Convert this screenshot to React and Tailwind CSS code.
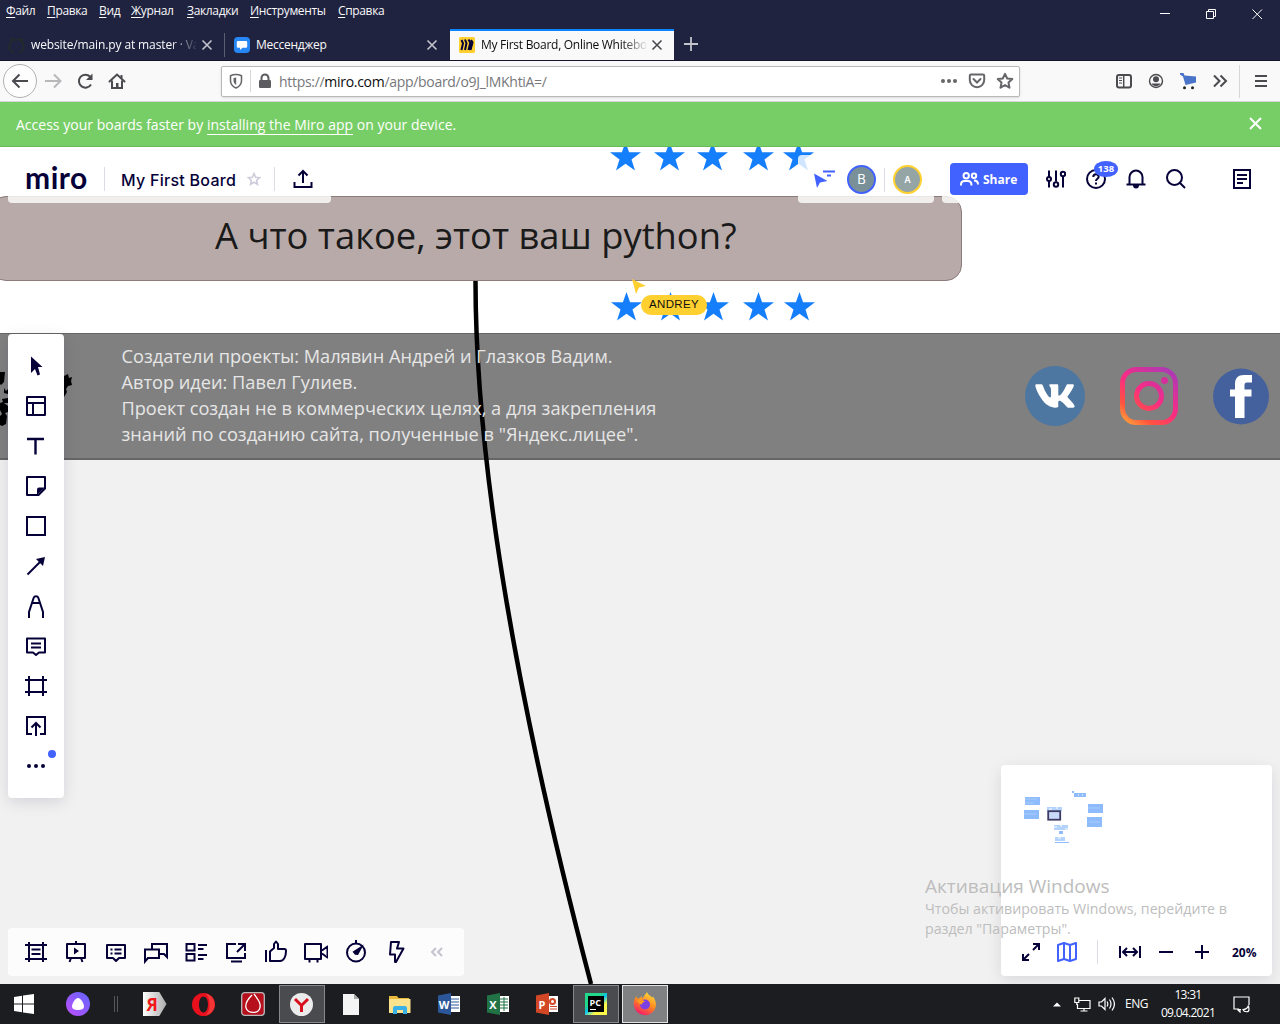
import { FaVk } from "react-icons/fa";

function Svg({ children, w = 24, h = 24, vb, className = "", sw = 2, stroke = "currentColor", fill = "none" }) {
  return (
    <svg width={w} height={h} viewBox={vb || `0 0 ${w} ${h}`} fill={fill} stroke={stroke} strokeWidth={sw} className={`shrink-0 ${className}`}>
      {children}
    </svg>
  );
}

const menu = [
  ["Ф", "айл", "w-[41px]"],
  ["П", "равка", "w-[52px]"],
  ["В", "ид", "w-[32px]"],
  ["Ж", "урнал", "w-[56px]"],
  ["З", "акладки", "w-[63px]"],
  ["И", "нструменты", "w-[88px]"],
  ["С", "правка", "w-[50px]"],
];

function Cross({ className = "" }) {
  return (
    <Svg w={12} h={12} sw={1.6} className={className}>
      <path d="M1.5 1.5l9 9M10.5 1.5l-9 9" />
    </Svg>
  );
}

function TitleBar() {
  return (
    <header className="flex h-[61px] shrink-0 flex-col border-b border-[#13142b] bg-[#202340] text-[#f9f9fa]">
      <div className="flex h-[29px] justify-between">
        <nav className="flex h-[21px] items-center pl-1.5 text-[12px] tracking-[-0.35px]">
          {menu.map(([a, b, w]) => (
            <span key={b} className={w}>
              <span className="underline underline-offset-2">{a}</span>
              {b}
            </span>
          ))}
        </nav>
        <div className="flex h-7 items-center">
          <Svg w={46} h={28} sw={1}><path d="M18 13.5h10" stroke="#fff" /></Svg>
          <Svg w={46} h={28} sw={1}><path d="M18.5 11.5h7v7h-7zM20.5 11.5v-2h7v7h-2" stroke="#fff" /></Svg>
          <Svg w={46} h={28} sw={1}><path d="M18.5 9.5l9.5 9.5M28 9.5l-9.5 9.5" stroke="#fff" /></Svg>
        </div>
      </div>
      <div className="flex h-8 items-stretch text-[12px] tracking-[-0.25px]">
        <div className="flex w-[225px] items-center pt-0.5 pl-2">
          <Svg w={17} h={17} sw={2.2} className="mr-1.5">
            <path d="M6 15.5c-7-2-6-13 2.5-13s9.5 11 2.5 13" stroke="#24292e" />
            <path d="M3.5 5l0-3 3 1M13.5 5l0-3-3 1" stroke="#24292e" sw={1} />
          </Svg>
          <div className="w-[165px] overflow-hidden tracking-[-0.12px] whitespace-nowrap [mask-image:linear-gradient(to_right,black_140px,transparent_168px)]">
            website/main.py at master · Vadim
          </div>
          <Cross className="ml-[5px] text-[#c4c4cc]" />
          <div className="ml-auto h-6 w-px bg-[#5c5e74]" />
        </div>
        <div className="flex w-[225px] items-center pt-0.5 pl-[9px]">
          <Svg w={16} h={16} className="mr-1.5">
            <rect width="16" height="16" rx="4" fill="#2787f5" stroke="none" />
            <path d="M4 4h8a1.2 1.2 0 0 1 1.2 1.2v4.3a1.2 1.2 0 0 1-1.2 1.2H8.500L6 13v-2.300H4A1.200 1.200 0 0 1 2.800 9.500V5.200A1.200 1.200 0 0 1 4 4z" fill="#fff" stroke="none" />
          </Svg>
          <span>Мессенджер</span>
          <Cross className="mr-3 ml-auto text-[#c4c4cc]" />
        </div>
        <div className="flex w-[224px] items-center border-t-2 border-[#0a84ff] bg-[#f9f9fa] pl-[9px] text-[#0c0c0d]">
          <Svg w={16} h={16} className="mr-1.5">
            <rect width="16" height="16" rx="1.500" fill="#ffd02f" stroke="none" />
            <path d="M2.500 3l1.500 3.300-1.500 6.700M6 2.500l1.500 3.800L6 13M9.500 2.500l1.800 3.300L9.500 13M12 3l1.500 2.500-2 7.500" stroke="#050038" strokeWidth="2" />
          </Svg>
          <div className="w-[165px] overflow-hidden tracking-[-0.28px] whitespace-nowrap [mask-image:linear-gradient(to_right,black_140px,transparent_168px)]">
            My First Board, Online Whiteboard
          </div>
          <Cross className="ml-[5px] text-[#4a4a4f]" />
        </div>
        <Svg w={34} h={30} sw={1.8}><path d="M17 8v14M10 15h14" stroke="#c4c4cc" /></Svg>
      </div>
    </header>
  );
}

function NavBar() {
  return (
    <div className="flex h-[41px] shrink-0 items-center border-b border-[#d7d7db] bg-[#f9f9fa] text-[#4a4a4f]">
      <div className="ml-[3px] flex size-[34px] items-center justify-center rounded-full border border-[#b1b1b3] bg-[#fdfdfe]">
        <Svg w={18} h={16}><path d="M17 8H2M8.500 1.500L2 8l6.500 6.500" /></Svg>
      </div>
      <Svg w={32} h={16} className="text-[#b8b8bb]"><path d="M8 8h15M17 1.500L23.500 8 17 14.500" /></Svg>
      <Svg w={32} h={18}>
        <path d="M22 12.500A6.500 6.500 0 1 1 21 4.500" />
        <path d="M23.500 1.500v6.500H17z" fill="currentColor" stroke="none" />
      </Svg>
      <Svg w={32} h={18}>
        <path d="M8.500 9.500L16 2.500l7.500 7" strokeLinecap="round" />
        <path d="M11 8.500V16h10V8.500M20.500 3v3" />
        <path d="M15 11h2.500v5H15z" fill="currentColor" stroke="none" />
      </Svg>
      <div className="ml-[88px] flex h-[31px] w-[799px] items-center rounded-[2px] border border-[#b9b9bb] bg-white shadow-sm">
        <Svg w={28} h={18} sw={1.5} className="text-[#66666a]">
          <path d="M14 2.500c2 0 4 .5 5.500 1.200v5c0 3-2.500 6-5.500 7.300-3-1.300-5.500-4.300-5.500-7.300v-5C10 3 12 2.500 14 2.500z" />
          <path d="M14.200 5.500v7.500c-2-1-2.700-3-2.700-4.500V6z" fill="currentColor" stroke="none" />
        </Svg>
        <div className="h-[22px] w-px bg-[#d7d7db]" />
        <Svg w={28} h={18}>
          <rect x="8" y="8" width="12" height="8" rx="1.200" fill="#5c5c60" stroke="none" />
          <path d="M10.500 9V6a3.500 3.500 0 0 1 7 0v3" stroke="#5c5c60" />
        </Svg>
        <div className="pt-px text-[14px] tracking-[-0.3px] text-[#77777b]">
          https://<span className="text-[#0c0c0d]">miro.com</span>/app/board/o9J_lMKhtiA=/
        </div>
        <div className="ml-auto flex items-center text-[#66666a]">
          <Svg w={28} h={18} fill="currentColor" stroke="none"><circle cx="8" cy="9" r="2" /><circle cx="14" cy="9" r="2" /><circle cx="20" cy="9" r="2" /></Svg>
          <Svg w={28} h={18}>
            <path d="M8 2.500h12a1.200 1.200 0 0 1 1.200 1.200v4.300a7.200 7.200 0 0 1-14.400 0V3.700A1.200 1.200 0 0 1 8 2.500z" />
            <path d="M10.500 7l3.500 3.500L17.500 7" strokeLinecap="round" />
          </Svg>
          <Svg w={28} h={18}><path d="M14 1.800l2.200 4.700 5.100.6-3.800 3.500 1 5.100-4.500-2.600-4.500 2.600 1-5.100-3.800-3.500 5.100-.6z" strokeLinejoin="round" /></Svg>
        </div>
      </div>
      <div className="ml-[88px] flex items-center">
        <Svg w={32} h={18}>
          <rect x="9" y="3" width="14" height="12.500" rx="2" />
          <path d="M15.700 3v12.500" strokeWidth="1.500" />
          <path d="M11 6h3M11 8.500h3M11 11h3" strokeWidth="1" />
        </Svg>
        <Svg w={32} h={18} sw={1.4}>
          <circle cx="16" cy="9" r="6.500" />
          <circle cx="16" cy="7.200" r="3" fill="currentColor" stroke="none" />
          <path d="M11.500 11.500h9c-1 2-2.800 2.700-4.500 2.700s-3.500-.7-4.500-2.700z" fill="currentColor" stroke="none" />
        </Svg>
        <Svg w={32} h={18}>
          <path d="M8 1h3.500l1 2.500 11.500 1v6l-10.500 2.500-2.500-8.500L8 2.500z" fill="#4a74c9" stroke="none" />
          <circle cx="12.500" cy="15.800" r="1.500" fill="#222" stroke="none" /><circle cx="20.500" cy="15.800" r="1.500" fill="#222" stroke="none" />
        </Svg>
        <Svg w={32} h={18}><path d="M10 3.500L15.500 9 10 14.500M16.500 3.500L22 9l-5.500 5.500" /></Svg>
        <div className="ml-[3px] h-[33px] w-px bg-[#d7d7db]" />
        <Svg w={40} h={18}><path d="M15 4h12M15 9h12M15 14h12" /></Svg>
      </div>
    </div>
  );
}

function Banner() {
  return (
    <div className="flex h-[45px] shrink-0 items-center justify-between border-b border-[#68b957] bg-[#78ce66] pr-[18px] pl-4 text-[14px] text-white">
      <p className="tracking-[0.015px] whitespace-nowrap">
        Access your boards faster by <a className="border-b border-white">installing the Miro app</a> on your device.
      </p>
      <Svg w={13} h={13} className="-mt-0.5"><path d="M1 1l11 11M12 1L1 12" /></Svg>
    </div>
  );
}

function Star({ className }) {
  return (
    <svg viewBox="0 0 31 29" width="31" height="29" className={`absolute ${className}`}>
      <path d="M15.500 0l3.600 10.300H31l-9.500 7.200L25 28.500l-9.500-6.700L6 28.500l3.500-11L0 10.300h11.900z" fill="#157efb" />
    </svg>
  );
}

function Board() {
  return (
    <div className="absolute inset-0">
      <div className="absolute inset-x-0 top-0 h-[186px] bg-white" />
      <Star className="top-[-5px] left-[609.5px]" />
      <Star className="top-[-5px] left-[653.5px]" />
      <Star className="top-[-5px] left-[696.5px]" />
      <Star className="top-[-5px] left-[742.5px]" />
      <Star className="top-[-5px] left-[782.5px]" />
      <div className="absolute top-[49px] left-[-10px] flex h-[85px] w-[972px] items-center rounded-[16px] border border-[#8a7c7b] bg-[#b8aaa8] pl-[224px] text-[36.35px] text-[#1a1a1a]">
        <span className="pb-1.5 whitespace-nowrap">А что такое, этот ваш python?</span>
      </div>
      <Star className="top-[145px] left-[610.5px]" />
      <Star className="top-[145px] left-[654.5px]" />
      <Star className="top-[145px] left-[697.5px]" />
      <Star className="top-[145px] left-[742.5px]" />
      <Star className="top-[145px] left-[783.5px]" />
      <footer className="absolute inset-x-0 top-[186px] flex h-[127px] items-center border-t border-b-2 border-[#666] bg-[#808080]">
        <svg width="80" height="70" viewBox="0 0 80 70" className="shrink-0">
          <path d="M0 11l5 0-1 10-3 3-1-1zM4 27l2 3 2-2v5l-4-1zM2 38l6-1v5l-4 0 4 3v6l-3 1 2 3-1 8-4 2-2-1v-9l2-2-2-4v-7l3-1zM64 15l4-2 1 4 3-1-1 4 1 4-4 1-2 3 1 3-3 5z" fill="#000" />
        </svg>
        <svg width="200" height="703" viewBox="0 0 200 703" className="absolute top-[-53px] left-[465px]">
          <path d="M10.500 0Q10.500 264 126 703" fill="none" stroke="#000" strokeWidth="4.500" />
        </svg>
        <p className="relative -mt-0.5 ml-[41.5px] text-[18.200px] leading-[26px] whitespace-nowrap text-[#e6e6e6]">
          Создатели проекты: Малявин Андрей и Глазков Вадим.<br />
          Автор идеи: Павел Гулиев.<br />
          Проект создан не в коммерческих целях, а для закрепления<br />
          знаний по созданию сайта, полученные в "Яндекс.лицее".
        </p>
        <div className="ml-auto flex items-center pr-[11px]">
          <div className="flex size-[60px] items-center justify-center rounded-full bg-[#4d76a1]">
            <FaVk className="size-[42px] text-white" />
          </div>
          <Svg w={58} h={58} sw={5} className="ml-[35px]">
            <defs>
              <linearGradient id="ig" x1="8" y1="58" x2="50" y2="0" gradientUnits="userSpaceOnUse">
                <stop offset="0" stopColor="#ffa03c" /><stop offset=".2" stopColor="#ff543e" /><stop offset=".5" stopColor="#fb2b84" /><stop offset="1" stopColor="#a83ab8" />
              </linearGradient>
            </defs>
            <rect x="2.500" y="2.500" width="53" height="53" rx="14" stroke="url(#ig)" />
            <circle cx="29" cy="29" r="12.500" stroke="url(#ig)" />
            <circle cx="44.500" cy="13.500" r="3.500" fill="#d4309a" stroke="none" />
          </Svg>
          <Svg w={56} h={57} className="ml-[35px]">
            <circle cx="28" cy="28.500" r="28" fill="#45619d" stroke="none" />
            <path d="M22 50V28.500h-5v-7h5V16c0-6 3-9 9-9h8v7.500h-5c-2 0-2.500 1-2.500 2.500v4.500h7v7h-7V50z" fill="#fff" stroke="none" />
          </Svg>
        </div>
      </footer>
      <svg width="14" height="15" viewBox="0 0 14 15" className="absolute top-[132px] left-[632px]">
        <path d="M0 0l14 7-7 1.500L4 15z" fill="#ffd02f" />
      </svg>
      <div className="absolute top-[148px] left-[641px] flex h-5 w-[66px] items-center justify-center rounded-full bg-[#ffd02f] font-['Liberation_Sans',sans-serif] text-[11.500px] tracking-[0.350px] text-[#111]">
        ANDREY
      </div>
    </div>
  );
}

function TopPanels() {
  return (
    <>
      <div className="absolute top-2 left-2 flex h-12 w-[323px] items-center rounded-[4px] bg-white/80 pl-[17px]">
        <span className="-mt-1 w-[62px] font-['Lato',sans-serif] text-[30px] leading-none font-bold tracking-[0.500px]">miro</span>
        <div className="ml-[17px] h-6 w-px bg-[#dcdce6]" />
        <span className="mt-px ml-4 w-[116px] font-['Inter',sans-serif] text-[16px] font-medium tracking-[0.270px] whitespace-nowrap">My First Board</span>
        <Svg w={14} h={14} sw={1.6} className="ml-[10px] text-[#cfcddb]"><path d="M7 1.500l1.600 3.700 4 .4-3 2.700.9 4L7 10.200l-3.500 2.100.9-4-3-2.700 4-.4z" /></Svg>
        <div className="ml-[13px] h-6 w-px bg-[#dcdce6]" />
        <Svg w={20} h={20} className="ml-[18px]"><path d="M1.500 13v5h17v-5M10 14V3M5.500 6.500L10 2l4.500 4.500" /></Svg>
      </div>
      <div className="absolute top-2 left-[798px] flex h-12 w-[136px] items-center rounded-[4px] bg-white/80 pt-px pl-4">
        <Svg w={21} h={18} className="-mt-0.5 text-[#4262ff]">
          <path d="M0 3.500l13.500 7.500-7.500 1.500L3 18z" fill="currentColor" stroke="none" />
          <path d="M9 1.500h12M13 5.500h4" />
        </Svg>
        <div className="ml-3 flex size-[29px] items-center justify-center rounded-full border-2 border-[#4262ff] bg-[#7a9098] font-['Inter',sans-serif] text-[13px] text-white">B</div>
        <div className="ml-2 h-6 w-px bg-[#dcdce6]" />
        <div className="ml-2 flex size-[29px] items-center justify-center rounded-full border-2 border-[#ffd02f] bg-[#95a5a6] font-['Inter',sans-serif] text-[9px] font-semibold text-white">A</div>
      </div>
      <div className="absolute top-2 left-[942px] flex h-12 w-[330px] items-center rounded-[4px] bg-white/80 pl-2">
        <button className="flex h-8 w-[78px] items-center rounded-[4px] bg-[#4262ff] pl-2.5 text-[12px] font-bold text-white">
          <Svg w={19} h={14} className="mr-1">
            <circle cx="6.200" cy="3.700" r="2.700" /><circle cx="14" cy="3.700" r="2.200" />
            <path d="M1 13.500v-1c0-2 1.500-3.500 3.500-3.500h3.400c2 0 3.500 1.500 3.500 3.500v1M14 8.500c2.500 0 4 1.500 4 4" />
          </Svg>
          <span className="pt-0.5">Share</span>
        </button>
        <Svg w={20} h={20} className="ml-[18px]">
          <path d="M3 1.500v17M10 1.500v11M17 8v10.500" />
          <circle cx="3" cy="10" r="2" fill="#fff" /><circle cx="10" cy="15.500" r="2.200" fill="#fff" /><circle cx="17" cy="5" r="2.200" fill="#fff" />
        </Svg>
        <div className="relative ml-5">
          <Svg w={20} h={20}>
            <circle cx="10" cy="10" r="9" />
            <path d="M7.300 8c0-3.700 5.400-3.500 5.400-.3 0 2-2.700 2-2.700 4.300M10 13.500v2" />
          </Svg>
          <span className="absolute -top-2 left-2 flex h-4 w-6 items-center justify-center rounded-[50%] bg-[#4262ff] text-[9.500px] font-bold text-white">138</span>
        </div>
        <Svg w={20} h={20} className="ml-5">
          <path d="M.5 15.500h19M3.500 15V8c0-3.500 3-6.500 6.500-6.500S16.500 4.500 16.500 8v7" />
          <path d="M7 16a3 3.500 0 0 0 6 0z" fill="currentColor" stroke="none" />
        </Svg>
        <Svg w={20} h={20} className="ml-5"><circle cx="8.500" cy="8.500" r="7.500" /><path d="M14 14l5 5" /></Svg>
        <Svg w={20} h={20} className="ml-[46px]"><path d="M2 1h16v18H2zM5 6h10M5 10h10M5 14h6" /></Svg>
      </div>
    </>
  );
}

const tools = [
  <path key="a" d="M7 2.500l11.500 10.500h-4.500L16 20.500 13.500 21.500 11 15l-4 4z" fill="currentColor" stroke="none" />,
  <path key="b" d="M3 3h18v18H3zM3 9h18M9 9v12" strokeLinejoin="round" />,
  <path key="c" d="M3 5h17M11.500 5v15.500" strokeWidth="2.400" />,
  <g key="d"><path d="M3 3h18v11.500L14.500 21H3z" strokeLinejoin="round" /><path d="M13 21v-5.500a2 2 0 0 1 2-2h6z" fill="currentColor" stroke="none" /></g>,
  <path key="e" d="M3 3h18v18H3z" />,
  <g key="f"><path d="M3.500 20.500L17 7" /><path d="M21 3l-2 9-7-7z" fill="currentColor" stroke="none" /></g>,
  <path key="g" d="M5 24v-6L9.800 3.500c.6-1.800 3.800-1.800 4.400 0L19 18v6M8.300 9h7.400" />,
  <g key="h"><path d="M3 4.500h18v14h-6l-3 2.500-3-2.500H3z" strokeLinejoin="round" /><path d="M7 9.500h10M7 13.500h10" /></g>,
  <path key="i" d="M5 2v20M19 2v20M1 6h22M1 18h22" />,
  <path key="j" d="M8 20H3V3h18v17h-5M12 22V9.500M7.500 13.500L12 9l4.500 4.500" />,
  <g key="k" fill="currentColor" stroke="none"><circle cx="5" cy="12" r="2" /><circle cx="12" cy="12" r="2" /><circle cx="19" cy="12" r="2" /><circle cx="28" cy="0" r="4" fill="#4262ff" /></g>,
];

const bottomTools = [
  <path key="a" d="M5 2v20M19 2v20M1 5h22M1 19h22M7.500 9.500h9M7.500 14h9" />,
  <g key="b"><path d="M3 4h18v14H3zM12 1v3M7 18l-1.500 4M17 18l1.500 4" strokeLinejoin="round" /><path d="M10 7.500l5 3.500-5 3.500z" fill="currentColor" stroke="none" /></g>,
  <g key="c"><path d="M3 5h18v13h-6l-3 3-3-3H3z" strokeLinejoin="round" /><path d="M6.500 9.500h2M10.500 9.500h7M6.500 13.500h2M10.500 13.500h7" /></g>,
  <path key="d" d="M1 21.500V9.500h14V18H4zM8 9V4h15v13l-3-3h-5" />,
  <path key="e" d="M2.500 4h8v6.500h-8zM2.500 14h8v6.500h-8zM14 5h9M14 9h5.500M14 15h9M14 19h5.500" />,
  <g key="f"><path d="M12 4H3v14h18v-5M7 21.500h11M13 12l7-7M14 4h7v7" /></g>,
  <path key="g" d="M2 10v12M6 21V11.500l4-3.500V4l2-2.500L14 4v5h6.500c1 0 1.500 1 1.500 2 0 5-2 10-6 10z" strokeLinejoin="round" />,
  <path key="h" d="M1 4h16v15H1zM18 10.500L23.500 6.500v11L18 13.500M5.500 19v3.500M13.500 19v3.500" strokeLinejoin="round" />,
  <g key="i"><circle cx="12" cy="12.500" r="9" /><path d="M12 0v3" /><path d="M17 7.500l-3.500 6.500-2-.2-1.500-1.800z" fill="currentColor" /></g>,
  <path key="j" d="M7 2h8l-2 6.500h6.500L12 22l-1 0v-7.500H6z" strokeLinejoin="round" />,
  <path key="k" d="M12 8l-4 4 4 4M18 8l-4 4 4 4" stroke="#c3c2cf" />,
];

const mapBlocks = [
  [24, 32, 15, 8], [23, 45, 15, 9], [46, 42, 15, 4], [73, 28, 12, 4], [71, 26, 2, 2], [87, 39, 15, 9], [86, 52, 15, 10],
  [53, 60, 14, 5], [58, 66, 4, 3], [54, 72, 10, 4], [54, 77, 14, 1],
];

function Minimap() {
  return (
    <div className="absolute top-[618px] left-[1001px] flex h-[211px] w-[271px] flex-col rounded-[4px] bg-white shadow-[0_4px_16px_rgba(5,0,56,0.1)]">
      <svg width="271" height="163" viewBox="0 0 271 163">
        {mapBlocks.map(([x, y, w, h], i) => (
          <rect key={i} x={x} y={y} width={w} height={h} fill={i === 2 || i === 7 || i === 9 ? "#b3d3fc" : "#8dbbfb"} />
        ))}
        <path d="M24 34h12M24 38h9M23 49h12M87 43h12M88 57h11" stroke="#a9cbfd" strokeWidth="1" />
        <path d="M53 62h3M59 61h2M64 64h3M48 44h3M55 43h2M57 73h3M77 30h1M81 30h1" stroke="#fff" strokeWidth="1" />
        <rect x="47.200" y="46.200" width="12" height="8.500" fill="#c9dbf8" stroke="#3f3a63" strokeWidth="1.800" />
      </svg>
      <div className="flex h-12 items-center pl-5">
        <Svg w={20} h={20}><path d="M12 8l5-5M8 12l-5 5M12 2h6v6M2 12v6h6" /></Svg>
        <Svg w={20} h={20} className="ml-4 text-[#4262ff]"><path d="M1 3l6-2 6 2 6-2v16l-6 2-6-2-6 2zM7 1v16M13 3v16" strokeLinejoin="round" /></Svg>
        <div className="ml-5 h-6 w-px bg-[#dcdce6]" />
        <Svg w={24} h={20} className="ml-5"><path d="M2 4v12M22 4v12M5 10h14M9 6l-4 4 4 4M15 6l4 4-4 4" /></Svg>
        <Svg w={14} h={20} className="ml-[17px]"><path d="M0 10h14" /></Svg>
        <Svg w={14} h={20} className="ml-[22px]"><path d="M0 10h14M7 3v14" /></Svg>
        <span className="mt-0.5 ml-[23px] text-[12px] font-bold">20%</span>
      </div>
    </div>
  );
}

function TaskIcon({ children, className = "w-[49px]" }) {
  return <div className={`flex h-[38px] items-center justify-center ${className}`}>{children}</div>;
}

function Office({ color, letter, children }) {
  return (
    <div className="relative flex h-[22px] w-[22px] items-center">
      <Svg w={22} h={22} className="absolute">
        <rect x="11" y="3" width="11" height="16" fill="#fff" stroke="none" />
        {children}
        <path d="M0 2.500L13 0v22L0 19.500z" fill={color} stroke="none" />
      </Svg>
      <span className="relative w-[13px] text-center text-[11px] leading-none font-bold text-white">{letter}</span>
    </div>
  );
}

function Taskbar() {
  return (
    <div className="flex h-10 shrink-0 items-center bg-[#1b1d20] text-[12px] text-white">
      <TaskIcon className="w-12">
        <Svg w={20} h={20} fill="#fff" stroke="none"><path d="M0 3l8-1.200v7.700H0zM9 1.600L20 0v9.500H9zM0 10.500h8v7.700L0 17zM9 10.500h11V20L9 18.400z" /></Svg>
      </TaskIcon>
      <TaskIcon className="ml-1.5 w-12">
        <Svg w={24} h={24} stroke="none">
          <defs><linearGradient id="al" x1="0" y1="1" x2="1" y2="0"><stop offset="0" stopColor="#c04dff" /><stop offset="1" stopColor="#5f66ff" /></linearGradient></defs>
          <circle cx="12" cy="12" r="12" fill="url(#al)" />
          <path d="M12 6c3 0 6 6 6 8.500S15.500 18 12 18s-6-1-6-3.500S9 6 12 6z" fill="#fff" />
        </Svg>
      </TaskIcon>
      <div className="ml-3 h-4 w-[4px] border-x border-[#55585c]" />
      <TaskIcon className="ml-3 w-[49px]">
        <div className="flex h-6 w-6 items-center bg-gradient-to-r from-white to-[#aaa] [clip-path:polygon(0_0,70%_0,100%_50%,70%_100%,0_100%)]">
          <span className="pl-1 text-[17px] leading-none font-bold text-[#f01818]">Я</span>
        </div>
      </TaskIcon>
      <TaskIcon>
        <Svg w={23} h={23} stroke="none">
          <path fillRule="evenodd" d="M11.500 0a11.500 11.500 0 1 1 0 23 11.500 11.500 0 0 1 0-23zm0 3.500c-6 0-6 16 0 16s6-16 0-16z" fill="#e8101c" />
          <path d="M13 .5c13 2 13 20 0 22 6-3 6-19 0-22z" fill="#ff5a50" opacity=".5" />
        </Svg>
      </TaskIcon>
      <TaskIcon>
        <Svg w={24} h={24} sw={1.3}>
          <rect x=".7" y=".7" width="22.600" height="22.600" rx="3" fill="#b5101c" stroke="#b9b9b9" />
          <path d="M11 3c-5 5-7.500 10-5.500 14s11 5 13 0-.5-8-5.500-15" stroke="#fff" />
        </Svg>
      </TaskIcon>
      <TaskIcon>
        <div className="flex h-[38px] w-[46px] items-center justify-center border border-[#86888a] bg-[#4a4b4e]">
          <Svg w={23} h={23}>
            <circle cx="11.500" cy="11.500" r="11.500" fill="#ececec" stroke="none" />
            <path d="M5 6l6.500 6.500L18 6M11.500 12v7" stroke="#d9101c" strokeWidth="3" />
          </Svg>
        </div>
      </TaskIcon>
      <TaskIcon>
        <Svg w={16} h={21} stroke="none"><path d="M0 0h11l5 5v16H0z" fill="#f4f4f4" /><path d="M11 0l5 5h-5z" fill="#aaa" /></Svg>
      </TaskIcon>
      <TaskIcon>
        <Svg w={22} h={19} stroke="none">
          <path d="M0 1h8l1.500 2H20v15H0z" fill="#e8b93c" /><path d="M0 4h21.500v14H0z" fill="#fbe28c" />
          <path d="M4 19v-6a2 2 0 0 1 2-2h10a2 2 0 0 1 2 2v6h-4v-4H8v4z" fill="#3ab1e6" />
        </Svg>
      </TaskIcon>
      <TaskIcon><Office color="#2b579a" letter="W"><path d="M13 6h8M13 9h8M13 12h8M13 15h8" stroke="#2b579a" strokeWidth="1" /></Office></TaskIcon>
      <TaskIcon><Office color="#217346" letter="X"><path d="M13 6h8M13 9h8M13 12h8M13 15h8M17 4v14" stroke="#217346" strokeWidth="1" /></Office></TaskIcon>
      <TaskIcon><Office color="#d24726" letter="P"><path d="M14 13.500h7M14 16h7" stroke="#d24726" strokeWidth="1" /><circle cx="16.500" cy="8.500" r="2.500" stroke="#d24726" /></Office></TaskIcon>
      <TaskIcon>
        <div className="flex h-[38px] w-[46px] items-center justify-center border border-[#86888a] bg-[#4a4b4e]">
          <div className="flex size-[22px] items-center justify-center bg-[linear-gradient(140deg,#21d789_35%,#07c3f2_50%,#fcf84a_70%)]">
            <div className="flex size-4 flex-col bg-black pt-0.5 pl-0.5">
              <span className="text-[9px] leading-[9px] font-bold">PC</span>
              <div className="mt-0.5 h-px w-1.5 bg-white" />
            </div>
          </div>
        </div>
      </TaskIcon>
      <TaskIcon>
        <div className="flex h-[38px] w-[46px] items-center justify-center border border-[#e4e4e4] bg-[#808183]">
          <Svg w={24} h={24} stroke="none">
            <defs><linearGradient id="ff" x1=".8" y1="0" x2=".3" y2="1"><stop offset="0" stopColor="#ffe23c" /><stop offset=".5" stopColor="#ff8a1f" /><stop offset="1" stopColor="#f5156c" /></linearGradient></defs>
            <path d="M14 0c1 3 3 3 5 5.500l1-1c3 4 4 9 1.500 13.500A11.300 11.300 0 0 1 1 14C0 9 2 6 3.500 4l.5 2.500L7 6l2-2v3z" fill="url(#ff)" />
            <circle cx="12" cy="12.500" r="5" fill="#7b3fe4" />
            <path d="M4 8c4-1.500 6 0 8 1.500-2 .5-3 1.500-3 3-2 0-4-1-5-4.500z" fill="#ff9a20" />
          </Svg>
        </div>
      </TaskIcon>
      <div className="ml-auto flex items-center">
        <Svg w={8} h={5} stroke="none"><path d="M0 4.500L4 .5l4 4z" fill="#fff" /></Svg>
        <Svg w={17} h={15} sw={1.2} className="ml-[13px]"><path d="M5 3.500h11v8H3.500V7M10 11.500v2.500M6.500 14h7M.8 1h4v4.500h-4zM2.800 5.500V8" /></Svg>
        <Svg w={17} h={16} sw={1.2} className="ml-[7px]"><path d="M1 6h2.500L7 2.500v11L3.500 10H1zM9 5.500c1 1.500 1 3.500 0 5M11.500 3.500c2 3 2 6 0 9M14 1.500c3 4 3 9 0 13" /></Svg>
        <span className="ml-2.5 w-6 tracking-[-0.5px]">ENG</span>
        <div className="ml-1.5 flex w-[66px] flex-col items-center text-[12px] leading-[18px] tracking-[-0.7px]">
          <span>13:31</span>
          <span>09.04.2021</span>
        </div>
        <Svg w={17} h={17} sw={1.2} className="mr-[30px] ml-3"><path d="M8 13.500H5.500v-.5H1V1h15v8M4.500 13.500L7 16v-2.500M15.500 9.500c-1 3-3 4-5.500 4 1 3 6 3 6 0z" /></Svg>
      </div>
    </div>
  );
}

export default function App() {
  return (
    <div className="flex h-[1024px] w-[1280px] flex-col overflow-hidden font-['Open_Sans','Noto_Sans',sans-serif]">
      <TitleBar />
      <NavBar />
      <Banner />
      <main className="relative flex-1 overflow-hidden bg-[#f1f1f1] text-[#050038]">
        <Board />
        <TopPanels />
        <aside className="absolute top-[187px] left-2 flex h-[464px] w-14 flex-col items-center rounded-[4px] bg-white pt-3 shadow-[0_4px_16px_rgba(5,0,56,0.12)]">
          {tools.map((t, i) => (
            <div key={i} className="flex h-10 items-center"><Svg className="overflow-visible">{t}</Svg></div>
          ))}
        </aside>
        <div className="absolute top-[781px] left-2 flex h-12 w-[456px] items-center rounded-[4px] bg-white/80 px-2">
          {bottomTools.map((t, i) => (
            <div key={i} className="flex w-10 justify-center"><Svg>{t}</Svg></div>
          ))}
        </div>
        <Minimap />
        <div className="absolute top-[726px] left-[925px] whitespace-nowrap text-[#bdbdbd]">
          <p className="text-[19px] leading-[26px]">Активация Windows</p>
          <p className="text-[14.200px] leading-5">Чтобы активировать Windows, перейдите в<br />раздел "Параметры".</p>
        </div>
      </main>
      <Taskbar />
    </div>
  );
}
